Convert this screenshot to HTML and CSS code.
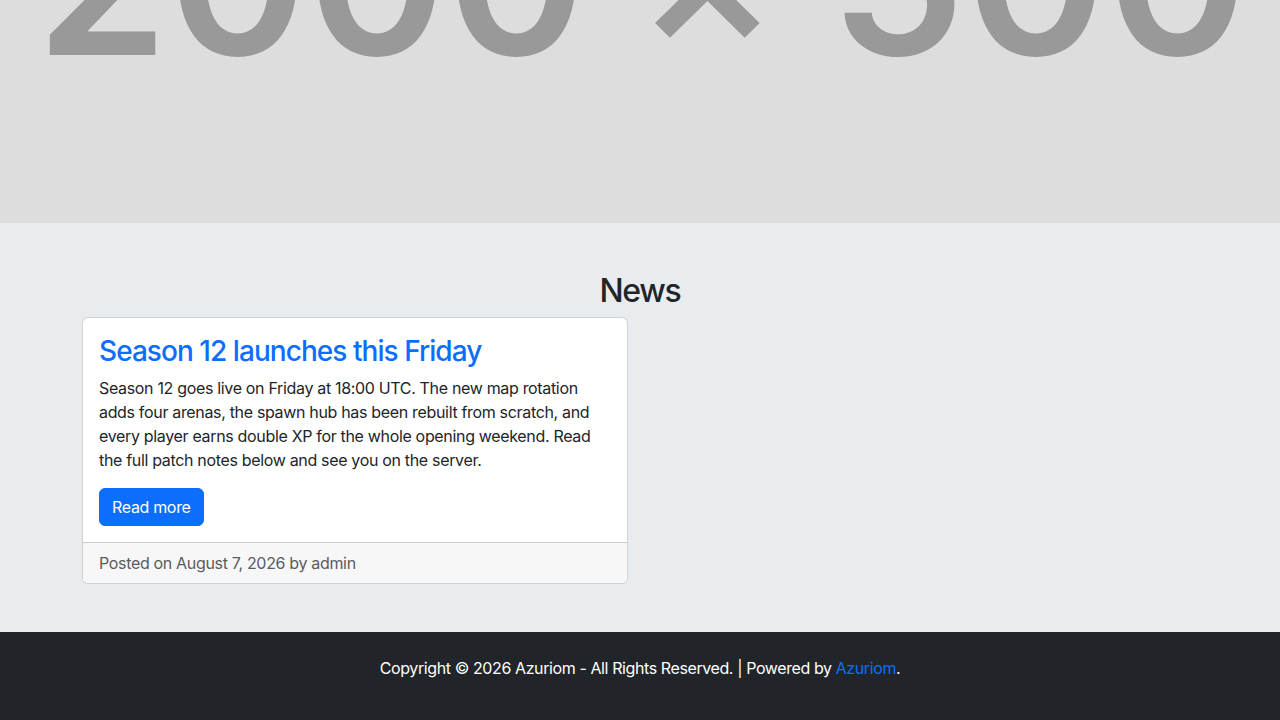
FILE: index.html
```html
<!DOCTYPE html>
<html lang="en">
<head>
<meta charset="utf-8">
<title>News</title>
<link rel="stylesheet" href="styles.css">
</head>
<body>
<header class="hero">
  <svg class="hero-img" width="1280" height="223" viewBox="0 0 1280 223" xmlns="http://www.w3.org/2000/svg" role="img" aria-label="2000 × 500">
    <rect width="1280" height="223" fill="#dddddd"/>
    <text x="36" y="55" textLength="550" lengthAdjust="spacingAndGlyphs" class="ph">2000</text>
    <text x="634" y="48" textLength="146" lengthAdjust="spacingAndGlyphs" class="ph ph-x">×</text>
    <text x="830" y="55" textLength="418" lengthAdjust="spacingAndGlyphs" class="ph">500</text>
  </svg>
</header>
<main class="content">
  <div class="container">
    <h2 class="section-title">News</h2>
    <div class="row">
      <div class="col">
        <article class="card">
          <div class="card-body">
            <h3 class="card-title"><a href="#">Season 12 launches this Friday</a></h3>
            <p class="card-text">Season 12 goes live on Friday at 18:00 UTC. The new map rotation adds four arenas, the spawn hub has been rebuilt from scratch, and every player earns double XP for the whole opening weekend. Read the full patch notes below and see you on the server.</p>
            <a href="#" class="btn">Read more</a>
          </div>
          <div class="card-footer">Posted on August 7, 2026 by admin</div>
        </article>
      </div>
    </div>
  </div>
</main>
<footer class="site-footer">
  <p>Copyright © 2026 Azuriom - All Rights Reserved. | Powered by <a href="#">Azuriom</a>.</p>
</footer>
</body>
</html>
```
FILE: styles.css
```css
* { box-sizing: border-box; }
html, body { margin: 0; padding: 0; }
body {
  font-family: Inter, Roboto, "Liberation Sans", sans-serif;
  font-size: 16px;
  line-height: 1.5;
  letter-spacing: -0.33px;
  color: #212529;
  background: #e9ecef;
}
.hero { height: 223px; overflow: hidden; background: #dddddd; }
.hero-img { display: block; }
.ph {
  font-family: Inter, "Liberation Sans", sans-serif;
  font-weight: 600;
  font-size: 215px;
  fill: #999999;
}
.ph-x { font-weight: 500; }
.content { padding: 48px 0; }
.container { width: 1140px; margin: 0 auto; padding: 0 12px; }
.section-title {
  margin: 0 0 8px;
  padding-top: 1px;
  text-align: center;
  font-size: 32px;
  font-weight: 500;
  line-height: 37px;
  letter-spacing: -1.3px;
}
.row { display: flex; margin: 0 -12px; }
.col { width: 50%; padding: 0 12px; }
.card {
  background: #fff;
  border: 1px solid rgba(0,0,0,.175);
  border-radius: 6px;
  overflow: hidden;
}
.card-body { padding: 16px; }
.card-title {
  margin: 0 0 8px;
  padding-top: 1px;
  font-size: 28px;
  font-weight: 500;
  line-height: 32.6px;
  letter-spacing: -0.95px;
}
.card-title a { color: #0d6efd; text-decoration: none; }
.card-text { margin: 0 0 16px; }
.btn {
  display: inline-block;
  padding: 6px 12px;
  background: #0d6efd;
  border: 1px solid #0d6efd;
  color: #fff;
  border-radius: 6px;
  text-decoration: none;
  line-height: 1.5;
}
.card-footer {
  padding: 8px 16px;
  background: #f7f7f7;
  border-top: 1px solid rgba(0,0,0,.175);
  color: #595c5f;
}
.site-footer {
  background: #212529;
  color: #fff;
  text-align: center;
  padding: 24px 0;
  letter-spacing: -0.4px;
}
.site-footer p { margin: 0 0 16px; }
.site-footer a { color: #0d6efd; text-decoration: none; }
```
